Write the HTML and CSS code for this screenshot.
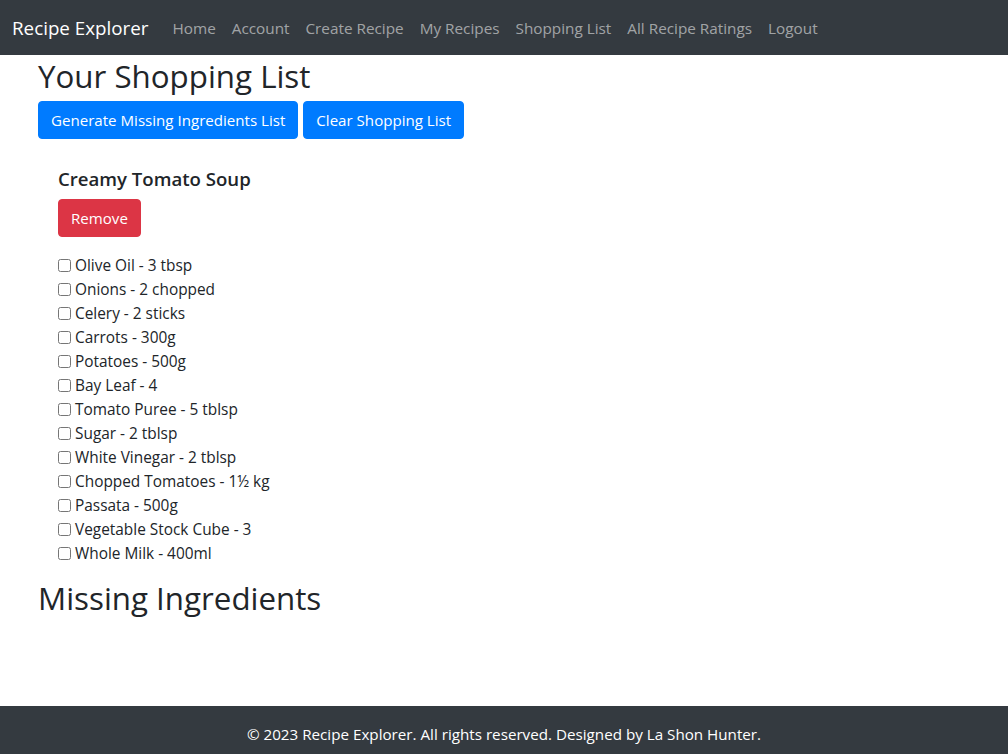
FILE: index.html
```html
<!DOCTYPE html>
<html lang="en">
<head>
<meta charset="utf-8">
<title>Shopping List - Recipe Explorer</title>
<link rel="stylesheet" href="styles.css">
</head>
<body>
<nav class="navbar">
  <a class="brand" href="#">Recipe Explorer</a>
  <ul class="nav">
    <li><a href="#">Home</a></li>
    <li><a href="#">Account</a></li>
    <li><a href="#">Create Recipe</a></li>
    <li><a href="#">My Recipes</a></li>
    <li><a href="#">Shopping List</a></li>
    <li><a href="#">All Recipe Ratings</a></li>
    <li><a href="#">Logout</a></li>
  </ul>
</nav>
<main class="container">
  <h1 class="page-title">Your Shopping List</h1>
  <div class="actions">
    <button class="btn btn-primary">Generate Missing Ingredients List</button>
    <button class="btn btn-primary">Clear Shopping List</button>
  </div>
  <section class="recipe">
    <h5 class="recipe-title">Creamy Tomato Soup</h5>
    <button class="btn btn-danger">Remove</button>
    <ul class="items">
      <li><label><input type="checkbox"> Olive Oil - 3 tbsp</label></li>
      <li><label><input type="checkbox"> Onions - 2 chopped</label></li>
      <li><label><input type="checkbox"> Celery - 2 sticks</label></li>
      <li><label><input type="checkbox"> Carrots - 300g</label></li>
      <li><label><input type="checkbox"> Potatoes - 500g</label></li>
      <li><label><input type="checkbox"> Bay Leaf - 4</label></li>
      <li><label><input type="checkbox"> Tomato Puree - 5 tblsp</label></li>
      <li><label><input type="checkbox"> Sugar - 2 tblsp</label></li>
      <li><label><input type="checkbox"> White Vinegar - 2 tblsp</label></li>
      <li><label><input type="checkbox"> Chopped Tomatoes - 1½ kg</label></li>
      <li><label><input type="checkbox"> Passata - 500g</label></li>
      <li><label><input type="checkbox"> Vegetable Stock Cube - 3</label></li>
      <li><label><input type="checkbox"> Whole Milk - 400ml</label></li>
    </ul>
  </section>
  <h2 class="section-title">Missing Ingredients</h2>
</main>
<footer class="footer">
  <p>© 2023 Recipe Explorer. All rights reserved. Designed by La Shon Hunter.</p>
</footer>
</body>
</html>
```

FILE: styles.css
```css
* { box-sizing: border-box; }
html, body { margin: 0; padding: 0; }
body {
  font-family: "Open Sans", "Noto Sans", sans-serif;
  font-size: 15.1px;
  line-height: 24px;
  color: #212529;
  background: #fff;
}
.navbar {
  height: 55px;
  background: #343a40;
  display: flex;
  align-items: center;
  padding: 0 12px;
}
.brand {
  color: #fff;
  font-size: 18.8px;
  line-height: 30px;
  text-decoration: none;
  margin-right: 16px;
}
.nav {
  display: flex;
  list-style: none;
  margin: 0;
  padding: 0;
}
.nav a {
  display: block;
  padding: 8px;
  color: rgba(255,255,255,.55);
  text-decoration: none;
  font-size: 15.3px;
}
.container {
  padding: 0 38px;
  min-height: 651px;
}
.page-title, .section-title {
  font-size: 31.3px;
  line-height: 38px;
  font-weight: 400;
  margin: 0 0 8px;
  padding-top: 2px;
  height: 38px;
}
.section-title { margin-top: 1px; }
.actions {
  display: flex;
  gap: 5px;
}
.btn {
  font-family: inherit;
  font-size: 15.1px;
  line-height: 24px;
  padding: 6px 12px;
  border: 1px solid transparent;
  border-radius: 4px;
  color: #fff;
  cursor: pointer;
}
.btn-primary { background: #007bff; border-color: #007bff; }
.btn-danger { background: #dc3545; border-color: #dc3545; }
.recipe {
  padding: 28px 20px 11px;
}
.recipe-title {
  font-size: 18.6px;
  line-height: 24px;
  font-weight: 600;
  margin: 0 0 8px;
}
.items {
  list-style: none;
  margin: 16px 0 0;
  padding: 0;
  font-size: 15.4px;
}
.items label {
  display: flex;
  align-items: center;
  gap: 4px;
  padding-top: 1px;
  height: 24px;
}
.items input {
  width: 13px;
  height: 13px;
  margin: 0 0 1px;
}
.footer {
  background: #343a40;
  color: #fff;
  text-align: center;
  padding: 16px;
  font-size: 15.2px;
}
.footer p { margin: 0; }
```
